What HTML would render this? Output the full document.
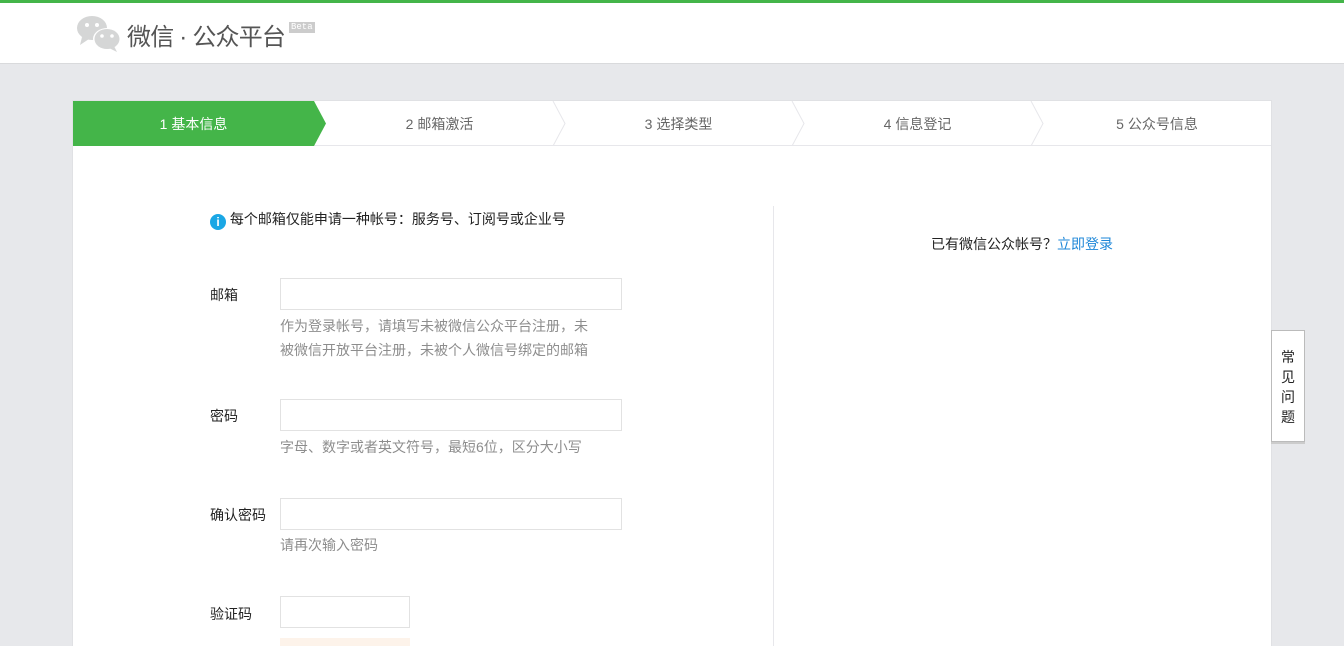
<!DOCTYPE html>
<html><head><meta charset="utf-8"><style>
*{margin:0;padding:0;box-sizing:border-box}
html{width:1344px;height:646px;overflow:hidden}
body{width:1344px;height:646px;overflow:hidden;background:#e7e8eb;font-family:"Liberation Sans","Noto Sans CJK SC",sans-serif;font-size:14px;color:#222;position:relative}
.hd{position:absolute;left:0;top:0;width:1344px;height:64px;background:#fff;border-top:3px solid #44b549;border-bottom:1px solid #d9dadc}
.logo{position:absolute;left:127px;top:14px;font-size:24px;color:#555;letter-spacing:-0.8px}
.beta{position:absolute;left:289px;top:19px;background:#ccc;color:#fff;font-size:9px;padding:0 2px;line-height:11px;font-family:"Liberation Mono",monospace}
.panel{position:absolute;left:72px;top:100px;width:1200px;height:546px;background:#fff;border:1px solid #e0e1e4;border-bottom:0}
.steps{position:absolute;left:0;top:0;width:1198px;height:45px;border-bottom:1px solid #e7e7eb}
.st{position:absolute;top:0;height:45px;line-height:47px;text-align:center;color:#666;font-size:14px}
.in{position:absolute;left:207px;width:342px;height:32px;border:1px solid #e2e2e2;background:#fff}
.lb{position:absolute;left:137px;font-size:14px}
.tip{position:absolute;left:207px;color:#8d8d8d;font-size:14px;line-height:24px}
.faq{position:absolute;left:1271px;top:330px;width:34px;height:112px;background:#fff;border:1px solid #bbb;text-align:center;font-size:14px;line-height:20px;padding-top:16px;box-shadow:0 2px 0 #ccc}
</style></head><body>
<div class="hd">
<svg style="position:absolute;left:76px;top:12px" width="46" height="38" viewBox="0 0 46 38"><ellipse cx="16" cy="13" rx="15" ry="12" fill="#d5d6d6"/><path d="M6 22 L4 30 L13 24Z" fill="#d5d6d6"/><circle cx="11" cy="10" r="2" fill="#fff"/><circle cx="21" cy="10" r="2" fill="#fff"/><ellipse cx="31" cy="24" rx="14" ry="11" fill="#fff"/><ellipse cx="31" cy="24" rx="12.5" ry="10" fill="#d5d6d6"/><path d="M38 31 L41 37 L33 33Z" fill="#d5d6d6"/><circle cx="26" cy="21" r="1.8" fill="#fff"/><circle cx="36" cy="21" r="1.8" fill="#fff"/></svg>
<div class="logo">微信 · 公众平台</div><div class="beta">Beta</div>
</div>
<div class="panel">
<div class="steps">
<svg style="position:absolute;left:0;top:0" width="1198" height="45"><path d="M0 0H241L253 22.5L241 45H0Z" fill="#44b549"/><path d="M480 0L492 22.5L480 45M719 0L731 22.5L719 45M958 0L970 22.5L958 45" stroke="#e7e7eb" fill="none"/></svg>
<div class="st" style="left:0;width:241px;color:#fff">1 基本信息</div>
<div class="st" style="left:253px;width:227px">2 邮箱激活</div>
<div class="st" style="left:492px;width:227px">3 选择类型</div>
<div class="st" style="left:731px;width:227px">4 信息登记</div>
<div class="st" style="left:970px;width:228px">5 公众号信息</div>
</div>
<div style="position:absolute;left:137px;top:108px;font-size:14px"><span style="display:inline-block;width:16px;height:16px;border-radius:50%;background:#1aa7e5;color:#fff;font-size:12px;line-height:16px;text-align:center;font-weight:bold;vertical-align:-2px">i</span> 每个邮箱仅能申请一种帐号：服务号、订阅号或企业号</div>
<div style="position:absolute;left:700px;top:105px;width:1px;height:460px;background:#e7e7eb"></div>
<div style="position:absolute;left:858px;top:133px">已有微信公众帐号？<span style="color:#1e87d8">立即登录</span></div>
<div class="lb" style="top:184px">邮箱</div><div class="in" style="top:177px"></div>
<div class="tip" style="top:213px">作为登录帐号，请填写未被微信公众平台注册，未<br>被微信开放平台注册，未被个人微信号绑定的邮箱</div>
<div class="lb" style="top:305px">密码</div><div class="in" style="top:298px"></div>
<div class="tip" style="top:334px">字母、数字或者英文符号，最短6位，区分大小写</div>
<div class="lb" style="top:404px">确认密码</div><div class="in" style="top:397px"></div>
<div class="tip" style="top:432px">请再次输入密码</div>
<div class="lb" style="top:503px">验证码</div><div class="in" style="top:495px;width:130px"></div>
<div style="position:absolute;left:207px;top:537px;width:130px;height:20px;background:#fdf3ea"></div>
</div>
<div class="faq">常<br>见<br>问<br>题</div>
</body></html>
